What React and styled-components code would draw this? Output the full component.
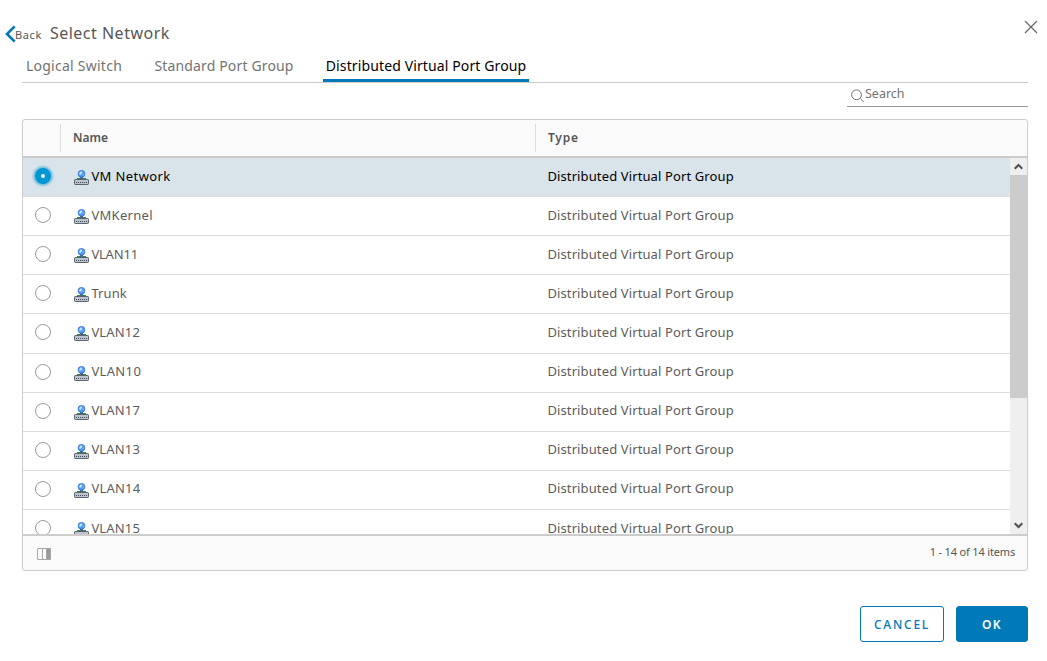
import React, { useState } from "react";
import styled, { createGlobalStyle } from "styled-components";

const GlobalStyle = createGlobalStyle`
  * { box-sizing: border-box; }
  body { margin: 0; background: #fff; color: #565656; font-family: "Noto Sans", sans-serif; font-size: 13px; overflow: hidden; }
  button { font-family: inherit; background: none; border: 0; padding: 0; cursor: pointer; }
`;

const Dialog = styled.div`
  width: 1047px;
  height: 661px;
  padding: 20px 19px 19px 22px;
  display: flex;
  flex-direction: column;
`;

const Header = styled.header`
  display: flex;
  align-items: center;
  height: 27px;
  margin: 0 -10px 0 -17px;
`;

const BackButton = styled.button`
  display: flex;
  align-items: center;
  color: #565656;
  font-size: 11px;
  letter-spacing: 0.6px;
  line-height: 16px;
  span { padding-top: 2px; margin-left: -1px; }
`;

const Title = styled.h1`
  margin: -2px 0 0 8px;
  font-size: 16px;
  line-height: 24px;
  font-weight: 400;
  letter-spacing: 0.5px;
  flex: 1;
`;

const CloseButton = styled.button`
  display: flex;
  margin-top: -13px;
`;

const Tabs = styled.nav`
  display: flex;
  height: 36px;
  border-bottom: 1px solid #ccc;
  padding-left: 1px;
  gap: 26px;
`;

const Tab = styled.button`
  height: 35px;
  padding: 3px 0 0;
  font-size: 14px;
  line-height: 32px;
  white-space: nowrap;
  width: ${(p) => p.$width}px;
  letter-spacing: ${(p) => p.$spacing}px;
  color: ${(p) => (p.$active ? "#000" : "#737373")};
  box-shadow: ${(p) => (p.$active ? "inset 0 -3px #0079b8" : "none")};
`;

const Search = styled.label`
  align-self: flex-end;
  width: 181px;
  height: 24px;
  border-bottom: 1px solid #9a9a9a;
  display: flex;
  align-items: center;
  padding-left: 4px;
  svg { margin-top: 2px; }
`;

const SearchInput = styled.input`
  border: 0;
  outline: 0;
  background: none;
  padding: 0 0 2px;
  width: 150px;
  height: 20px;
  font: 12.5px "Noto Sans", sans-serif;
  &::placeholder { color: #737373; opacity: 1; }
`;

const Grid = styled.section`
  margin-top: 12px;
  height: 452px;
  border: 1px solid #ccc;
  border-radius: 3px;
  display: flex;
  flex-direction: column;
  background: #fafafa;
`;

const HeadRow = styled.div`
  height: 38px;
  border-bottom: 2px solid #ccc;
  display: flex;
  align-items: center;
  flex: none;
`;

const HeadCell = styled.div`
  width: ${(p) => p.$width}px;
  height: 28px;
  line-height: 28px;
  padding-left: 12px;
  font-size: 12px;
  font-weight: 600;
  letter-spacing: ${(p) => p.$spacing || 0}px;
  border-right: ${(p) => (p.$last ? "0" : "1px solid #ddd")};
`;

const Viewport = styled.div`
  height: 376px;
  display: flex;
  overflow: hidden;
  background: #fff;
`;

const Rows = styled.div`
  flex: 1;
  height: 376px;
  overflow: hidden;
`;

const Row = styled.div`
  display: flex;
  height: 39.12px;
  align-items: center;
  padding-bottom: 2px;
  border-bottom: 1px solid #ddd;
  cursor: pointer;
  background: ${(p) => (p.$selected ? "#d9e4ea" : "#fff")};
  color: ${(p) => (p.$selected ? "#000" : "#5c5c5c")};
`;

const RadioCell = styled.div`
  width: 50px;
  padding-left: 12px;
`;

const Radio = styled.div`
  width: 16px;
  height: 16px;
  border-radius: 50%;
  border: 1px solid #9a9a9a;
  background: #fff;
  ${(p) =>
    p.$checked &&
    `border: 6px solid #0095d3;
     background: #fff;
     box-shadow: 0 0 2px 2px rgba(0, 149, 211, 0.45);`}
`;

const NameCell = styled.div`
  width: 474.4px;
  display: flex;
  align-items: center;
  svg { margin: 3px 2.4px 0 1px; flex: none; }
`;

const CellText = styled.span`
  line-height: 20px;
  margin-top: -1px;
  letter-spacing: ${(p) => p.$spacing ?? 0.12}px;
  white-space: nowrap;
`;

const Scrollbar = styled.div`
  width: 17px;
  background: #efefef;
  display: flex;
  flex-direction: column;
`;

const Thumb = styled.div`
  height: 223px;
  background: #ccc;
`;

const ArrowButton = styled.div`
  height: 17px;
  display: flex;
  align-items: center;
  justify-content: center;
  padding-bottom: ${(p) => (p.$end ? 0 : 1)}px;
  margin-top: ${(p) => (p.$end ? "auto" : 0)};
`;

const Footer = styled.footer`
  flex: 1;
  border-top: 2px solid #ccc;
  display: flex;
  align-items: center;
  justify-content: space-between;
  padding: 0 12px 0 14px;
  font-size: 11px;
  svg { margin-top: 2px; }
  ${CellText} { margin-top: -2px; }
`;

const Actions = styled.div`
  display: flex;
  justify-content: flex-end;
  gap: 12px;
  margin-top: 35px;
`;

const Button = styled.button`
  width: ${(p) => p.$width}px;
  height: 36px;
  && {
    border: 1px solid #0079b8;
    border-radius: 3px;
    background: ${(p) => (p.$primary ? "#0079b8" : "#fff")};
  }
  color: ${(p) => (p.$primary ? "#fff" : "#0079b8")};
  font-size: 12px;
  font-weight: ${(p) => (p.$primary ? 600 : 500)};
  letter-spacing: ${(p) => (p.$primary ? 1.4 : 1.75)}px;
  padding-top: 1px;
`;

const PortGroupIcon = () => (
  <svg width="15" height="15" viewBox="0 0 15 15">
    <path d="M3 8.5H6M9 8.5H12" stroke="#1d9a1d" />
    <rect x="6" y="7" width="3" height="2" fill="#49628a" />
    <circle cx="7.5" cy="3.8" r="3.4" fill="#4f9bf5" stroke="#2f6fd0" strokeWidth=".8" />
    <path d="M5 3.6 6.6 1.4 8.4 1.8 7.6 3.8 6 5Z" fill="#c9e4ff" />
    <path d="M8.6 5 10 3.6" stroke="#90c4ff" />
    <rect x=".5" y="9.5" width="14" height="5" rx=".7" fill="#bcc3cc" stroke="#5b6470" />
    <path d="M2 12.5H13" stroke="#414a56" strokeDasharray="1 1" />
  </svg>
);

const Chevron = ({ down }) => (
  <svg width="9" height="7" viewBox="0 0 9 7" fill="none" stroke="#505050" strokeWidth="2">
    <path d={down ? "M.7 1.2 4.5 5 8.3 1.2" : "M.7 5.8 4.5 2 8.3 5.8"} />
  </svg>
);

const networks = [
  { name: "VM Network", spacing: 0.4 },
  { name: "VMKernel", spacing: 0.3 },
  { name: "VLAN11", spacing: -0.2 },
  { name: "Trunk", spacing: 0.1 },
  { name: "VLAN12", spacing: 0.15 },
  { name: "VLAN10", spacing: 0.35 },
  { name: "VLAN17", spacing: 0.15 },
  { name: "VLAN13", spacing: 0.15 },
  { name: "VLAN14", spacing: 0.2 },
  { name: "VLAN15", spacing: 0.15 },
];

const tabs = [
  { label: "Logical Switch", width: 102, spacing: 0.25 },
  { label: "Standard Port Group", width: 146, spacing: 0.15 },
  { label: "Distributed Virtual Port Group", width: 206, spacing: 0.12 },
];

export default function App() {
  const [selected, setSelected] = useState(0);
  const [tab, setTab] = useState(2);

  return (
    <Dialog>
      <GlobalStyle />
      <Header>
        <BackButton>
          <svg width="11" height="18" viewBox="0 0 11 18" fill="none" stroke="#0079b8" strokeWidth="2.6">
            <path d="M9.7 1.3 2 9l7.7 7.7" />
          </svg>
          <span>Back</span>
        </BackButton>
        <Title>Select Network</Title>
        <CloseButton aria-label="Close">
          <svg width="14" height="14" viewBox="0 0 14 14" stroke="#666" strokeWidth="1.2">
            <path d="M1 1 13 13M13 1 1 13" />
          </svg>
        </CloseButton>
      </Header>
      <Tabs>
        {tabs.map((t, i) => (
          <Tab key={t.label} $width={t.width} $spacing={t.spacing} $active={i === tab} onClick={() => setTab(i)}>
            {t.label}
          </Tab>
        ))}
      </Tabs>
      <Search>
        <svg width="14" height="14" viewBox="0 0 14 14" fill="none" stroke="#737373">
          <circle cx="5.5" cy="5.8" r="4.9" />
          <path d="m9 9.3 3.8 3.8" />
        </svg>
        <SearchInput placeholder="Search" />
      </Search>
      <Grid>
        <HeadRow>
          <HeadCell $width={38} />
          <HeadCell $width={475}>Name</HeadCell>
          <HeadCell $width={470} $spacing={0.75} $last>Type</HeadCell>
        </HeadRow>
        <Viewport>
          <Rows>
            {networks.map(({ name, spacing }, i) => (
              <Row key={name} $selected={i === selected} onClick={() => setSelected(i)}>
                <RadioCell>
                  <Radio $checked={i === selected} />
                </RadioCell>
                <NameCell>
                  <PortGroupIcon />
                  <CellText $spacing={spacing}>{name}</CellText>
                </NameCell>
                <CellText>Distributed Virtual Port Group</CellText>
              </Row>
            ))}
          </Rows>
          <Scrollbar>
            <ArrowButton><Chevron /></ArrowButton>
            <Thumb />
            <ArrowButton $end><Chevron down /></ArrowButton>
          </Scrollbar>
        </Viewport>
        <Footer>
          <svg width="14" height="12" viewBox="0 0 14 12" fill="none" stroke="#a8a8a8">
            <rect x=".5" y=".5" width="13" height="11" rx=".5" />
            <path d="M5.5 0V12" />
            <rect x="9.5" y=".5" width="4" height="11" fill="#9a9a9a" />
          </svg>
          <CellText $spacing={-0.17}>1 - 14 of 14 items</CellText>
        </Footer>
      </Grid>
      <Actions>
        <Button $width={84}>CANCEL</Button>
        <Button $width={72} $primary>OK</Button>
      </Actions>
    </Dialog>
  );
}
